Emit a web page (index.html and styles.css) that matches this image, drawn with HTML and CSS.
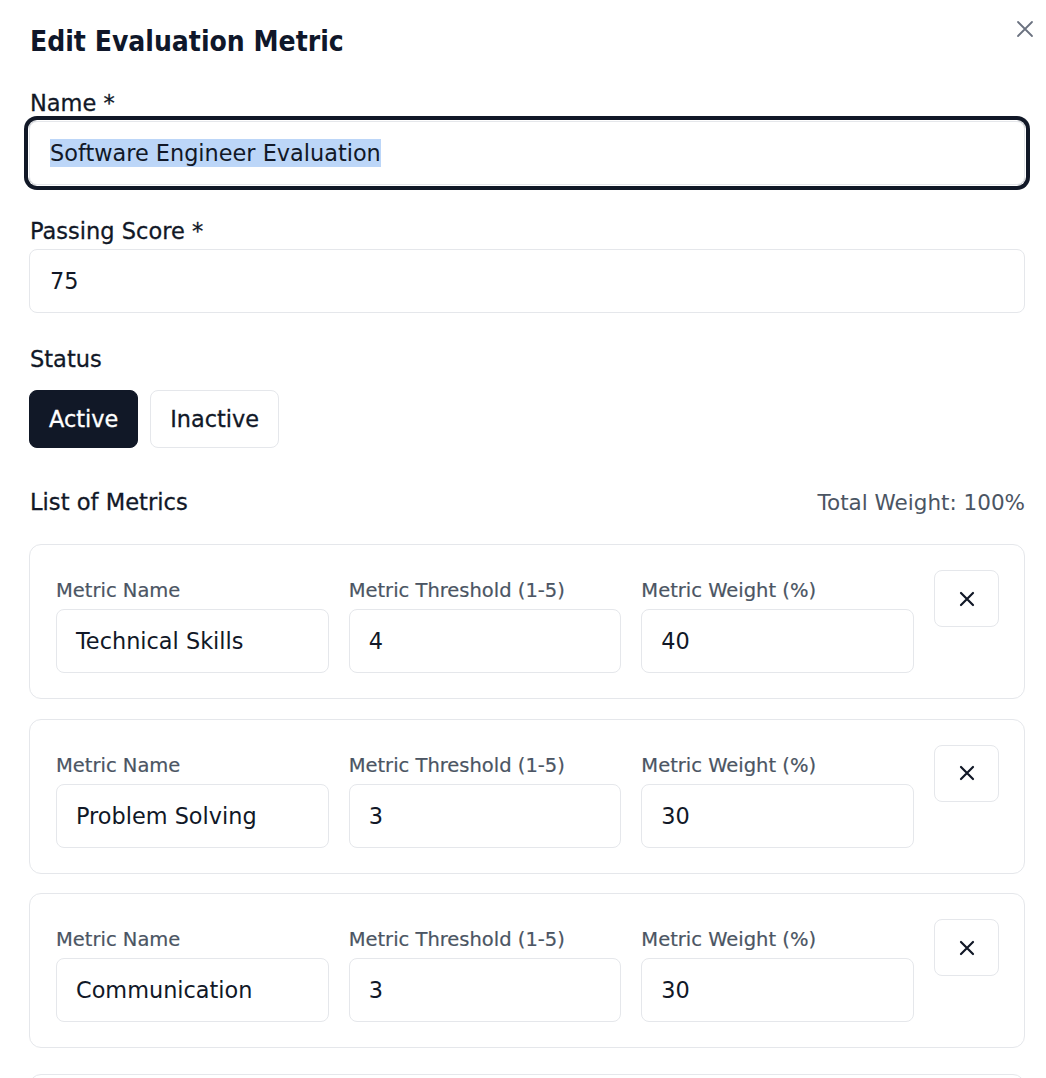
FILE: index.html
```html
<!DOCTYPE html>
<html lang="en">
<head>
<meta charset="utf-8">
<title>Edit Evaluation Metric</title>
<link rel="stylesheet" href="styles.css">
</head>
<body>
<div class="dialog">
  <button class="close" aria-label="Close">
    <svg width="18" height="18" viewBox="0 0 18 18" fill="none" stroke="currentColor" stroke-width="1.8" stroke-linecap="round"><path d="M2 2L16 16M16 2L2 16"/></svg>
  </button>
  <h2 class="title">Edit Evaluation Metric</h2>

  <div class="field">
    <label class="label">Name *</label>
    <div class="input input-focused"><span class="selected">Software Engineer Evaluation</span></div>
  </div>

  <div class="field">
    <label class="label">Passing Score *</label>
    <div class="input">75</div>
  </div>

  <div class="field">
    <label class="label label-status">Status</label>
    <div class="toggle-group">
      <button class="toggle toggle-active">Active</button>
      <button class="toggle">Inactive</button>
    </div>
  </div>

  <div class="metrics-header">
    <span class="metrics-title">List of Metrics</span>
    <span class="metrics-total">Total Weight: 100%</span>
  </div>

  <div class="metric-list">
    <div class="metric-card">
      <div class="metric-fields">
        <div class="metric-field"><label class="metric-label">Metric Name</label><div class="metric-input">Technical Skills</div></div>
        <div class="metric-field"><label class="metric-label">Metric Threshold (1-5)</label><div class="metric-input">4</div></div>
        <div class="metric-field"><label class="metric-label">Metric Weight (%)</label><div class="metric-input">40</div></div>
      </div>
      <button class="remove" aria-label="Remove"><svg width="16" height="16" viewBox="0 0 16 16" fill="none" stroke="currentColor" stroke-width="2.2" stroke-linecap="round"><path d="M2 2L14 14M14 2L2 14"/></svg></button>
    </div>
    <div class="metric-card">
      <div class="metric-fields">
        <div class="metric-field"><label class="metric-label">Metric Name</label><div class="metric-input">Problem Solving</div></div>
        <div class="metric-field"><label class="metric-label">Metric Threshold (1-5)</label><div class="metric-input">3</div></div>
        <div class="metric-field"><label class="metric-label">Metric Weight (%)</label><div class="metric-input">30</div></div>
      </div>
      <button class="remove" aria-label="Remove"><svg width="16" height="16" viewBox="0 0 16 16" fill="none" stroke="currentColor" stroke-width="2.2" stroke-linecap="round"><path d="M2 2L14 14M14 2L2 14"/></svg></button>
    </div>
    <div class="metric-card">
      <div class="metric-fields">
        <div class="metric-field"><label class="metric-label">Metric Name</label><div class="metric-input">Communication</div></div>
        <div class="metric-field"><label class="metric-label">Metric Threshold (1-5)</label><div class="metric-input">3</div></div>
        <div class="metric-field"><label class="metric-label">Metric Weight (%)</label><div class="metric-input">30</div></div>
      </div>
      <button class="remove" aria-label="Remove"><svg width="16" height="16" viewBox="0 0 16 16" fill="none" stroke="currentColor" stroke-width="2.2" stroke-linecap="round"><path d="M2 2L14 14M14 2L2 14"/></svg></button>
    </div>
    <div class="metric-card metric-card-next"></div>
  </div>
</div>
</body>
</html>
```
FILE: styles.css
```css
html, body {
  margin: 0;
  padding: 0;
  background: #ffffff;
  overflow: hidden;
}

body {
  font-family: "DejaVu Sans", "Liberation Sans", sans-serif;
  color: #111827;
}

.dialog {
  position: relative;
  padding: 24px 21px 0 29px;
  height: 1078px;
  box-sizing: border-box;
  overflow: hidden;
}

.close {
  position: absolute;
  top: 20px;
  right: 12px;
  width: 18px;
  height: 18px;
  padding: 0;
  border: 0;
  background: none;
  color: #6b7280;
  display: flex;
}

.title {
  margin: 0 0 29px 1px;
  font-family: "DejaVu Sans Condensed", "DejaVu Sans", sans-serif;
  font-size: 28px;
  line-height: 36px;
  font-weight: 700;
  color: #0f172a;
}

.field {
  display: flex;
  flex-direction: column;
  margin-bottom: 32px;
}

.label {
  font-size: 22.5px;
  line-height: 28px;
  margin: 0 0 4px 1px;
  color: #111827;
  -webkit-text-stroke: 0.3px #111827;
}

.label-status {
  margin-bottom: 17px;
}

.input {
  height: 64px;
  box-sizing: border-box;
  border: 1px solid #e5e7eb;
  border-radius: 8px;
  padding: 0 20px;
  display: flex;
  align-items: center;
  font-size: 22.4px;
  color: #111827;
}

.input-focused {
  box-shadow: 0 0 0 1px #ffffff, 0 0 0 5px #111827;
}

.selected {
  background: #bcd6f8;
  line-height: 28px;
}

.toggle-group {
  display: flex;
  gap: 12px;
}

.toggle {
  height: 58px;
  padding: 0 19px;
  border: 1px solid #e5e7eb;
  border-radius: 8px;
  background: #ffffff;
  font-family: inherit;
  font-size: 22.4px;
  color: #111827;
  -webkit-text-stroke: 0.3px currentColor;
}

.toggle-active {
  background: #111827;
  border-color: #111827;
  color: #ffffff;
}

.metrics-header {
  display: flex;
  justify-content: space-between;
  align-items: baseline;
  margin-top: 40px;
  padding-left: 1px;
  line-height: 28px;
}

.metrics-title {
  font-size: 22.6px;
  color: #111827;
  -webkit-text-stroke: 0.3px #111827;
}

.metrics-total {
  font-size: 21.5px;
  color: #4b5563;
}

.metric-list {
  display: flex;
  flex-direction: column;
  gap: 19.5px;
  margin-top: 27px;
}

.metric-card {
  display: flex;
  align-items: flex-start;
  gap: 20px;
  padding: 25px 25px 25px 26px;
  border: 1px solid #e5e7eb;
  border-radius: 12px;
}

.metric-card-next {
  margin-top: 6px;
  height: 155px;
  box-sizing: border-box;
}

.metric-fields {
  flex: 1;
  display: grid;
  grid-template-columns: repeat(3, 1fr);
  gap: 20px;
  margin-top: 9px;
}

.metric-field {
  display: flex;
  flex-direction: column;
  min-width: 0;
}

.metric-label {
  font-size: 19.5px;
  line-height: 24px;
  color: #4b5563;
  margin-bottom: 6px;
  -webkit-text-stroke: 0.2px #4b5563;
}

.metric-input {
  height: 64px;
  box-sizing: border-box;
  border: 1px solid #e5e7eb;
  border-radius: 8px;
  padding: 0 19px;
  display: flex;
  align-items: center;
  font-size: 22.4px;
  color: #111827;
  white-space: nowrap;
}

.remove {
  width: 65px;
  height: 57px;
  flex: none;
  border: 1px solid #e5e7eb;
  border-radius: 8px;
  background: #ffffff;
  color: #111827;
  display: flex;
  align-items: center;
  justify-content: center;
  padding: 0;
}
```
